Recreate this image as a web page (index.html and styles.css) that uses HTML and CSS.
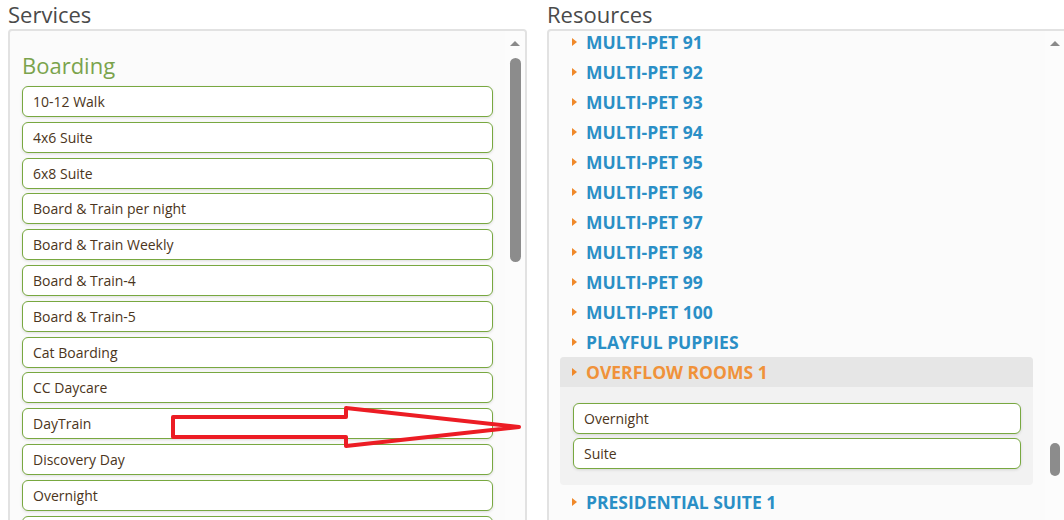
FILE: index.html
```html
<!DOCTYPE html>
<html lang="en">
<head>
  <meta charset="UTF-8" />
  <title>Services and Resources</title>
  <link rel="stylesheet" href="styles.css">
</head>
<body>

<div class="page">
  <div class="column services-col">
    <h2 class="col-title">Services</h2>
    <div class="panel">
      <div class="panel-body services-body">
        <h3 class="group-title">Boarding</h3>
        <div class="service">10-12 Walk</div>
        <div class="service">4x6 Suite</div>
        <div class="service">6x8 Suite</div>
        <div class="service">Board &amp; Train per night</div>
        <div class="service">Board &amp; Train Weekly</div>
        <div class="service">Board &amp; Train-4</div>
        <div class="service">Board &amp; Train-5</div>
        <div class="service">Cat Boarding</div>
        <div class="service">CC Daycare</div>
        <div class="service">DayTrain</div>
        <div class="service">Discovery Day</div>
        <div class="service">Overnight</div>
        <div class="service"></div>
      </div>
      <div class="scrollbar">
        <span class="scroll-up"></span>
        <span class="thumb services-thumb"></span>
      </div>
    </div>
  </div>

  <div class="column resources-col">
    <h2 class="col-title">Resources</h2>
    <div class="panel">
      <div class="panel-body resources-body">
        <div class="resource"><span class="caret"></span>MULTI-PET 91</div>
        <div class="resource"><span class="caret"></span>MULTI-PET 92</div>
        <div class="resource"><span class="caret"></span>MULTI-PET 93</div>
        <div class="resource"><span class="caret"></span>MULTI-PET 94</div>
        <div class="resource"><span class="caret"></span>MULTI-PET 95</div>
        <div class="resource"><span class="caret"></span>MULTI-PET 96</div>
        <div class="resource"><span class="caret"></span>MULTI-PET 97</div>
        <div class="resource"><span class="caret"></span>MULTI-PET 98</div>
        <div class="resource"><span class="caret"></span>MULTI-PET 99</div>
        <div class="resource"><span class="caret"></span>MULTI-PET 100</div>
        <div class="resource"><span class="caret"></span>PLAYFUL PUPPIES</div>

        <div class="resource-open">
          <div class="resource active"><span class="caret"></span>OVERFLOW ROOMS 1</div>
          <div class="resource-services">
            <div class="service">Overnight</div>
            <div class="service">Suite</div>
          </div>
        </div>

        <div class="resource"><span class="caret"></span>PRESIDENTIAL SUITE 1</div>
      </div>
      <div class="scrollbar">
        <span class="scroll-up"></span>
        <span class="thumb resources-thumb"></span>
      </div>
    </div>
  </div>
</div>

<!-- red hand-drawn arrow lying over the page -->
<svg class="drag-arrow" width="1064" height="520" viewBox="0 0 1064 520">
  <polygon points="173,417 346,417 346,408 519,427 346,446 346,437 173,437"
           fill="none" stroke="#ec1c24" stroke-width="4" stroke-linejoin="round"/>
</svg>

</body>
</html>
```

FILE: styles.css
```css
body {
  margin: 0;
  font-family: 'Open Sans', 'Noto Sans', sans-serif;
  background: #fff;
  overflow: hidden;
  height: 520px;
}

.page {
  display: flex;
  gap: 20px;
  padding-left: 8px;
}

.column {
  display: flex;
  flex-direction: column;
  flex-shrink: 0;
}

.services-col {
  width: 519px;
}

.resources-col {
  width: 520px;
}

.col-title {
  margin: 0;
  height: 29px;
  font-size: 22px;
  font-weight: 400;
  line-height: 28px;
  color: #4a4a4a;
}

.panel {
  display: flex;
  height: 491px;
  border: 2px solid #e2e2e2;
  border-bottom: none;
  border-radius: 4px 4px 0 0;
  background: #fbfbfb;
  overflow: hidden;
}

.panel-body {
  flex: 1;
  overflow: hidden;
}

/* fake scrollbar */
.scrollbar {
  width: 20px;
  display: flex;
  flex-direction: column;
  align-items: center;
  background: #fcfcfc;
}

.scroll-up {
  width: 0;
  height: 0;
  margin-top: 10px;
  border-left: 5px solid transparent;
  border-right: 5px solid transparent;
  border-bottom: 5px solid #8a8a8a;
}

.thumb {
  width: 11px;
  border-radius: 6px;
  background: #8c8c8c;
}

.services-thumb {
  height: 204px;
  margin-top: 12px;
}

.resources-thumb {
  width: 10px;
  height: 33px;
  margin-top: 397px;
}

/* services list */
.services-body {
  padding-left: 12px;
  padding-right: 12px;
}

.group-title {
  margin: 0;
  padding-top: 19px;
  height: 36px;
  font-size: 22px;
  font-weight: 400;
  line-height: 30px;
  color: #7aa34c;
}

.service {
  box-sizing: border-box;
  height: 31px;
  margin-bottom: 4.8px;
  padding-left: 10px;
  border: 1px solid #78a840;
  border-radius: 6px;
  background: #fff;
  box-shadow: 0 1px 3px rgba(0,0,0,0.12);
  font-size: 14px;
  line-height: 29px;
  color: #4b3520;
  white-space: nowrap;
}

/* resources list */
.resources-body {
  margin-top: -4px;
}

.resource {
  display: flex;
  align-items: center;
  height: 30px;
  padding-left: 23px;
  font-size: 17.5px;
  font-weight: 700;
  color: #2a8fc6;
  white-space: nowrap;
}

.caret {
  width: 0;
  height: 0;
  margin-right: 9px;
  border-top: 4px solid transparent;
  border-bottom: 4px solid transparent;
  border-left: 5px solid #f0892a;
}

.resource-open {
  margin: 0 12px 2px 11px;
  border-radius: 4px;
  background: #f2f2f2;
  overflow: hidden;
}

.resource.active {
  padding-left: 12px;
  background: #e6e6e6;
  color: #f0923a;
}

.resource-services {
  padding: 16px 12px 16px 13px;
}

.resource-services .service {
  margin-bottom: 4px;
}

.resource-services .service:last-child {
  margin-bottom: 0;
}

.drag-arrow {
  position: absolute;
  top: 0;
  left: 0;
  pointer-events: none;
}
```
